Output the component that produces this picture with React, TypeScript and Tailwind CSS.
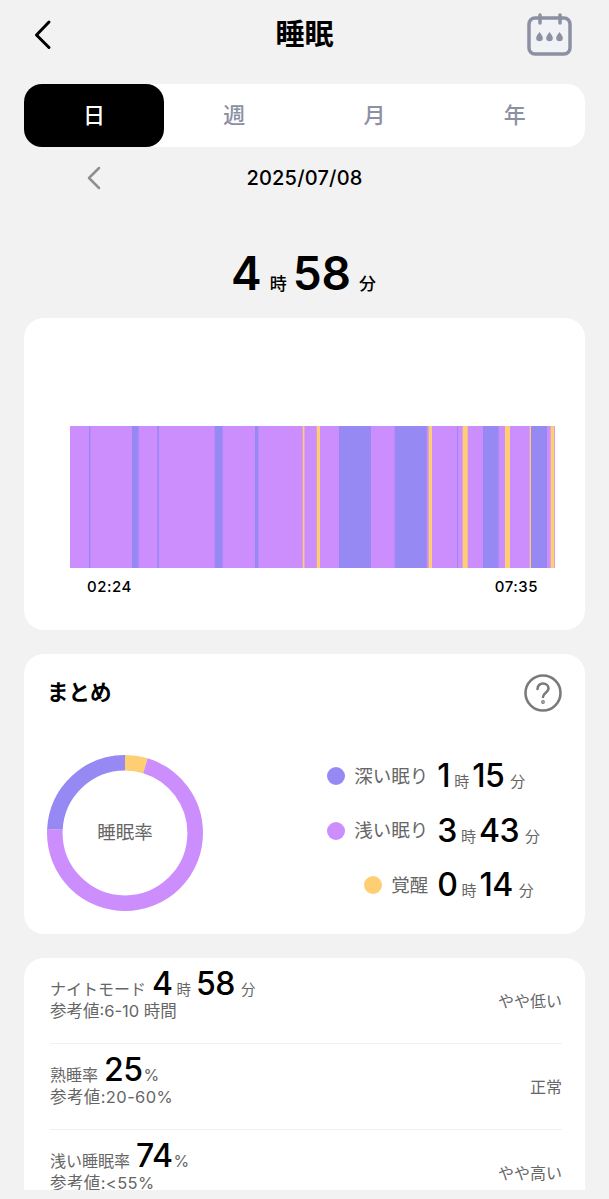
import { ReactNode } from 'react';

const DEEP = '#9689f4';
const LIGHT = '#cc8efd';
const AWAKE = '#fdcf72';

// start / end of each stage on the chart, in px from the bar's left edge
const stages: { from: number; to: number; color: string }[] = [
    { from: 19, to: 20.4, color: DEEP },
    { from: 62, to: 68.7, color: DEEP },
    { from: 87.3, to: 89, color: DEEP },
    { from: 144.7, to: 152.7, color: DEEP },
    { from: 185, to: 188.3, color: DEEP },
    { from: 232.8, to: 234.4, color: AWAKE },
    { from: 246.8, to: 250, color: AWAKE },
    { from: 269, to: 301, color: DEEP },
    { from: 324.7, to: 356.7, color: DEEP },
    { from: 358.7, to: 362, color: AWAKE },
    { from: 387, to: 388, color: DEEP },
    { from: 392.7, to: 397.7, color: AWAKE },
    { from: 413, to: 428.7, color: DEEP },
    { from: 435, to: 440, color: AWAKE },
    { from: 459.7, to: 461, color: AWAKE },
    { from: 461, to: 477, color: DEEP },
    { from: 480.7, to: 484.3, color: AWAKE },
];

const Num = ({ children }: { children: ReactNode }) => (
    <span className="text-[32px] font-medium leading-none tracking-[-0.5px] text-black">{children}</span>
);

const Duration = ({ h, m }: { h: string; m: string }) => (
    <div className="flex items-baseline">
        <Num>{h}</Num>
        <span className="ml-[4px] mr-[3px] text-[15px] leading-none text-[#666]">時</span>
        <Num>{m}</Num>
        <span className="ml-[6px] text-[15px] leading-none text-[#666]">分</span>
    </div>
);

const LegendLabel = ({ color, label }: { color: string; label: string }) => (
    <div className="flex items-center justify-end gap-[9px]">
        <span className="h-[18px] w-[18px] rounded-full" style={{ backgroundColor: color }} />
        <span className="text-[18.5px] leading-none text-[#666]">{label}</span>
    </div>
);

const Donut = () => {
    const r = 70.2;
    const c = 2 * Math.PI * r;
    const parts = [
        { color: AWAKE, start: 0, size: 0.047 },
        { color: LIGHT, start: 0.047, size: 0.71 },
        { color: DEEP, start: 0.757, size: 0.243 },
    ];
    return (
        <div className="relative -ml-[1px] -mt-[1px] h-[156px] w-[156px]">
            <svg width="156" height="156" viewBox="0 0 156 156" className="-rotate-90">
                {parts.map((p) => (
                    <circle
                        key={p.color}
                        cx="78"
                        cy="78"
                        r={r}
                        fill="none"
                        stroke={p.color}
                        strokeWidth="15.6"
                        strokeDasharray={`${p.size * c} ${c}`}
                        strokeDashoffset={-p.start * c}
                    />
                ))}
            </svg>
            <span className="absolute inset-0 flex items-center justify-center text-[18.5px] text-[#666]">睡眠率</span>
        </div>
    );
};

const MetricRow = ({ label, value, hint, status, wide, last }: { label: string; value: ReactNode; hint: string; status: string; wide?: boolean; last?: boolean }) => (
    <div className={`flex h-[86px] items-center justify-between border-b ${last ? 'border-transparent' : 'border-[#f0f0f0]'}`}>
        <div className="-mt-[11px]">
            <div className="flex h-[31px] items-baseline gap-[6px]">
                <span className="text-[16px] leading-none text-[#666]">{label}</span>
                {value}
            </div>
            <div className={`my-[4px] text-[16.5px] leading-[16px] text-[#666] ${wide ? 'tracking-[0.4px]' : ''}`}>{hint}</div>
        </div>
        <span className="text-[16px] text-[#666]">{status}</span>
    </div>
);

export default function App() {
    return (
        <div className="h-[1199px] w-[609px] overflow-hidden bg-[#f2f2f2] px-[24px] font-['Inter','Noto_Sans_CJK_JP',sans-serif]">
            {/* header */}
            <div className="grid h-[84px] grid-cols-[1fr_auto_1fr] items-start pt-[13px]">
                <svg width="42" height="42" viewBox="0 0 42 42" className="mt-[1px]" fill="none" stroke="#000" strokeWidth="3" strokeLinecap="round" strokeLinejoin="round">
                    <path d="M25 8 L12.5 21 L25 33.5" />
                </svg>
                <h1 className="mt-[3px] text-[29px] font-bold leading-[38px] text-black">睡眠</h1>
                <svg width="46" height="43" viewBox="0 0 46 43" className="mr-[12px] justify-self-end" fill="none">
                    <rect x="2" y="5" width="41" height="36" rx="6" fill="#f1f2f6" stroke="#8b90a3" strokeWidth="3.5" />
                    <path d="M13 2v8M33 2v8" stroke="#8b90a3" strokeWidth="3.5" strokeLinecap="round" />
                    <path d="M12.500 19c2.200 2.800 3.300 4.400 3.300 6a3.300 3.300 0 0 1-6.600 0c0-1.600 1.100-3.200 3.300-6zM22.500 19c2.200 2.800 3.300 4.400 3.300 6a3.300 3.300 0 0 1-6.600 0c0-1.600 1.100-3.200 3.300-6zM32.500 19c2.200 2.800 3.300 4.400 3.300 6a3.300 3.300 0 0 1-6.600 0c0-1.600 1.100-3.200 3.300-6z" fill="#8b90a3" />
                </svg>
            </div>

            {/* day / week / month / year */}
            <div className="grid h-[63px] grid-cols-4 rounded-[18px] bg-white text-[22px] font-medium text-[#8b90a3]">
                <div className="flex items-center justify-center rounded-[18px] bg-black text-white">日</div>
                <div className="flex items-center justify-center">週</div>
                <div className="flex items-center justify-center">月</div>
                <div className="flex items-center justify-center">年</div>
            </div>

            {/* date */}
            <div className="relative flex h-[62px] items-center justify-center text-[20px] font-medium tracking-[0.2px] text-black">
                <svg width="16" height="24" viewBox="0 0 16 24" className="absolute left-[62px] top-[19px]" fill="none" stroke="#8f8f8f" strokeWidth="2.500" strokeLinecap="round" strokeLinejoin="round">
                    <path d="M13 2 L3 12 L13 22" />
                </svg>
                2025/07/08
            </div>

            {/* total */}
            <div className="flex h-[109px] items-baseline justify-center pr-[2px] pt-[35px]">
                <span className="text-[46px] font-semibold leading-[58px] text-black">4</span>
                <span className="ml-[8px] mr-[6px] text-[17px] font-medium text-black">時</span>
                <span className="text-[46px] font-semibold leading-[58px] text-black">58</span>
                <span className="ml-[8px] text-[17px] font-medium text-black">分</span>
            </div>

            {/* stage chart */}
            <div className="h-[312px] rounded-[20px] bg-white pl-[46px] pr-[30px] pt-[108px]">
                <svg width="485" height="142" viewBox="0 0 485 142" className="block">
                    <rect width="485" height="142" fill={LIGHT} />
                    {stages.map((s) => (
                        <rect key={s.from} x={s.from} width={s.to - s.from} height="142" fill={s.color} />
                    ))}
                </svg>
                <div className="mt-[9px] flex justify-between px-[17px] text-[15px] font-medium leading-[20px] tracking-[0.5px] text-black">
                    <span>02:24</span>
                    <span>07:35</span>
                </div>
            </div>

            {/* summary */}
            <div className="mt-[24px] h-[280px] rounded-[20px] bg-white px-[24px] pt-[20px]">
                <div className="flex items-center justify-between">
                    <h2 className="-ml-[1px] -mt-[2px] text-[21.5px] font-semibold leading-[37px] text-black">まとめ</h2>
                    <svg width="38" height="38" viewBox="0 0 38 38" className="-mr-[1px]" fill="none" stroke="#7a7a7a" strokeWidth="2.600" strokeLinecap="round">
                        <circle cx="19" cy="19" r="17.500" />
                        <path d="M13.500 15c0-3.500 2.500-5.500 5.500-5.500s5.500 2 5.500 5c0 4-5.500 4.500-5.500 8.500" />
                        <circle cx="19" cy="28" r="0.600" fill="#7a7a7a" />
                    </svg>
                </div>
                <div className="mt-[44px] flex items-start justify-between">
                    <Donut />
                    <div className="mr-[21px] mt-[4px] grid grid-cols-[auto_auto] items-center gap-x-[9px] gap-y-[22.5px]">
                        <LegendLabel color={DEEP} label="深い眠り" />
                        <Duration h="1" m="15" />
                        <LegendLabel color={LIGHT} label="浅い眠り" />
                        <Duration h="3" m="43" />
                        <LegendLabel color={AWAKE} label="覚醒" />
                        <Duration h="0" m="14" />
                    </div>
                </div>
            </div>

            {/* metrics, cut off by the bottom of the scroll area */}
            <div className="mt-[24px] h-[232px] overflow-hidden rounded-t-[20px] bg-white pl-[26px] pr-[23px]">
                <MetricRow
                    label="ナイトモード"
                    value={
                        <span className="flex items-baseline">
                            <Num>4</Num>
                            <span className="ml-[4px] mr-[5px] text-[14.5px] leading-none text-[#666]">時</span>
                            <Num>58</Num>
                            <span className="ml-[6px] text-[14.5px] leading-none text-[#666]">分</span>
                        </span>
                    }
                    hint="参考値:6-10 時間"
                    status="やや低い"
                />
                <MetricRow
                    wide
                    label="熟睡率"
                    value={
                        <span className="flex items-baseline">
                            <Num>25</Num>
                            <span className="ml-[1px] text-[16px] leading-none text-[#666]">%</span>
                        </span>
                    }
                    hint="参考値:20-60%"
                    status="正常"
                />
                <MetricRow
                    last
                    wide
                    label="浅い睡眠率"
                    value={
                        <span className="flex items-baseline">
                            <Num>74</Num>
                            <span className="ml-[1px] text-[16px] leading-none text-[#666]">%</span>
                        </span>
                    }
                    hint="参考値:<55%"
                    status="やや高い"
                />
            </div>
        </div>
    );
}
